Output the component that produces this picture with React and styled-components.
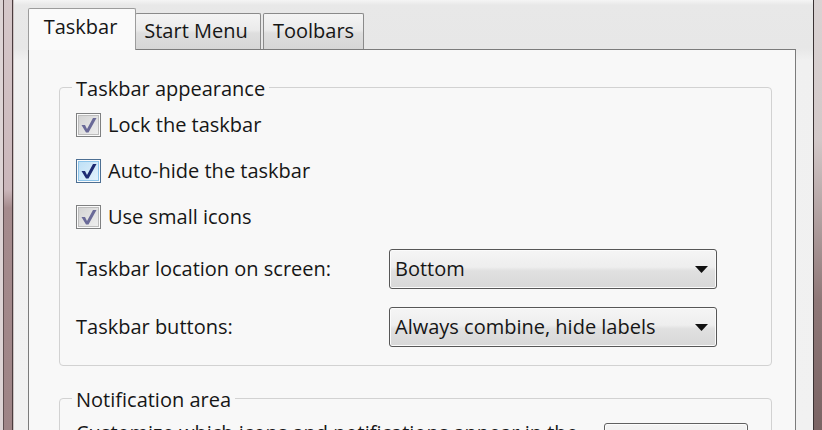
import React from 'react';
import styled, { createGlobalStyle } from 'styled-components';

const Global = createGlobalStyle`
  html, body { margin: 0; padding: 0; }
  body {
    width: 822px;
    height: 430px;
    overflow: hidden;
    background: #ececec;
    font-family: "Open Sans", "Noto Sans", sans-serif;
    color: #161616;
  }
`;

const Window = styled.div`
  display: flex;
  width: 822px;
  height: 430px;
  overflow: hidden;
`;

const LeftFrame = styled.div`
  flex: 0 0 14px;
  background:
    linear-gradient(to right, #ddd4d5 0 3px, #5e4e50 3px 4px, transparent 4px 12px, #4a3c3e 12px 13px, #cdc3c3 13px 14px),
    linear-gradient(to bottom, #d6c8ca 0, #cab6ba 190px, #a58b8d 208px, #9e8486 100%);
`;

const RightFrame = styled.div`
  flex: 0 0 9px;
  background:
    linear-gradient(to right, #3a3233 0 1px, transparent 1px),
    linear-gradient(to bottom, #dad3d3 0, #d2c8c8 140px, #8f7878 300px, #7a6464 100%);
`;

const Content = styled.div`
  flex: 1;
  display: flex;
  flex-direction: column;
  padding: 0 17px 0 14px;
  background: linear-gradient(to bottom, #f5f5f5 0, #e8e8e8 5px, #e7e7e7 48px, #f0f0f0 60px, #f1f1f1 100%);
`;

const TabStrip = styled.div`
  display: flex;
  align-items: flex-end;
  height: 49px;
  flex: 0 0 49px;
`;

const Tab = styled.div`
  box-sizing: border-box;
  position: relative;
  z-index: ${p => (p.$active ? 2 : 1)};
  width: ${p => p.$w}px;
  height: ${p => (p.$active ? 42 : 36)}px;
  margin-bottom: ${p => (p.$active ? '-1px' : '0')};
  margin-left: ${p => p.$ml || 0}px;
  padding: ${p => (p.$active ? 6 : 5)}px ${p => p.$pr || 0}px 0 0;
  border: 1px solid ${p => (p.$active ? '#9c9c9c' : '#8a8a8a')};
  border-bottom: none;
  border-radius: 2px 2px 0 0;
  background: ${p =>
    p.$active
      ? '#fafafa'
      : 'linear-gradient(to bottom, #f4f4f4 0%, #ebebeb 45%, #dedede 55%, #d6d6d6 100%)'};
  text-align: center;
  font-size: 20px;
  line-height: 24px;
  white-space: nowrap;
`;

const Panel = styled.div`
  flex: 1;
  display: flex;
  flex-direction: column;
  border: 1px solid #7b7b7b;
  border-bottom: none;
  background: #f8f8f8;
  padding: 37px 23px 0 30px;
`;

const GroupBox = styled.div`
  display: flex;
  flex-direction: column;
  border: 1px solid #d2d2d2;
  border-radius: 4px;
  padding: 0 ${p => p.$pr || 0}px ${p => p.$pb || 0}px 16px;
  margin-top: ${p => p.$mt || 0}px;
`;

const Legend = styled.div`
  align-self: flex-start;
  margin: -12px 0 0 -4px;
  padding: 0 4px;
  background: #f8f8f8;
  font-size: 20px;
  line-height: 26px;
`;

const CheckList = styled.div`
  display: flex;
  flex-direction: column;
  gap: 22px;
  margin-top: 11px;
`;

const CheckRow = styled.label`
  display: flex;
  align-items: center;
  gap: 7px;
  height: 24px;
  font-size: 20px;
  line-height: 24px;
`;

const CheckBox = styled.span`
  box-sizing: border-box;
  flex: 0 0 25px;
  height: 24px;
  display: flex;
  padding: 1px;
  border: 1px solid ${p => (p.$focus ? '#4d6f93' : '#7f8081')};
  background: #fbfbfb;
`;

const CheckInner = styled.span`
  flex: 1;
  display: flex;
  align-items: center;
  justify-content: center;
  border: 1px solid ${p => (p.$focus ? '#8cc4ea' : '#bdbdbd')};
  background: ${p =>
    p.$focus
      ? 'linear-gradient(135deg, #bfe0f6 0%, #e2f2fc 100%)'
      : 'linear-gradient(135deg, #d4d4d4 0%, #eeeeee 100%)'};
`;

const SelectList = styled.div`
  display: flex;
  flex-direction: column;
  gap: 18px;
  margin-top: 20px;
`;

const SelectRow = styled.div`
  display: grid;
  grid-template-columns: 313px 328px;
  align-items: center;
  font-size: 20px;
  line-height: 24px;
`;

const Select = styled.div`
  box-sizing: border-box;
  height: 40px;
  display: flex;
  align-items: center;
  justify-content: space-between;
  padding: 0 8px 0 5px;
  border: 1px solid #575757;
  border-radius: 3px;
  background: linear-gradient(to bottom, #f5f5f5 0%, #eeeeee 45%, #e0e0e0 55%, #d8d8d8 100%);
  box-shadow: inset 0 0 0 1px #fbfbfb;
  white-space: nowrap;
`;

const BottomRow = styled.div`
  display: flex;
  align-items: flex-start;
  margin-top: 8px;
  font-size: 20px;
  line-height: 24px;
`;

const Desc = styled.div`
  flex: 1;
  min-width: 0;
`;

const Button = styled.div`
  box-sizing: border-box;
  flex: 0 0 144px;
  height: 40px;
  margin: 2px 0 0 10px;
  display: flex;
  align-items: center;
  justify-content: center;
  border: 1px solid #606060;
  border-radius: 3px;
  background: linear-gradient(to bottom, #f4f4f4 0%, #ececec 45%, #dfdfdf 55%, #d3d3d3 100%);
  box-shadow: inset 0 0 0 1px #fcfcfc;
`;

const Check = ({ focus }) => (
  <svg width="17" height="17" viewBox="0 0 17 17">
    <polygon
      points="1.5,8 5,8 7,12 13,1 16.5,1 8.5,15.5 6,15.5"
      fill={focus ? '#1d2b72' : '#6a6a98'}
    />
  </svg>
);

const Arrow = () => (
  <svg width="13" height="7" viewBox="0 0 13 7">
    <polygon points="0,0 13,0 6.5,7" fill="#111" />
  </svg>
);

const checks = [
  { label: 'Lock the taskbar', focus: false },
  { label: 'Auto-hide the taskbar', focus: true },
  { label: 'Use small icons', focus: false },
];

const selects = [
  { label: 'Taskbar location on screen:', value: 'Bottom' },
  { label: 'Taskbar buttons:', value: 'Always combine, hide labels' },
];

export default function App() {
  return (
    <>
      <Global />
      <Window>
        <LeftFrame />
        <Content>
          <TabStrip>
            <Tab $active $w={108} $pr={3}>Taskbar</Tab>
            <Tab $w={126} $ml={-1} $pr={4}>Start Menu</Tab>
            <Tab $w={101} $ml={2}>Toolbars</Tab>
          </TabStrip>
          <Panel>
            <GroupBox $pb={18}>
              <Legend>Taskbar appearance</Legend>
              <CheckList>
                {checks.map(c => (
                  <CheckRow key={c.label}>
                    <CheckBox $focus={c.focus}>
                      <CheckInner $focus={c.focus}>
                        <Check focus={c.focus} />
                      </CheckInner>
                    </CheckBox>
                    {c.label}
                  </CheckRow>
                ))}
              </CheckList>
              <SelectList>
                {selects.map(s => (
                  <SelectRow key={s.label}>
                    <span>{s.label}</span>
                    <Select>
                      <span>{s.value}</span>
                      <Arrow />
                    </Select>
                  </SelectRow>
                ))}
              </SelectList>
            </GroupBox>
            <GroupBox $mt={32} $pr={23} $pb={18}>
              <Legend>Notification area</Legend>
              <BottomRow>
                <Desc>Customize which icons and notifications appear in the notification area.</Desc>
                <Button>Customize...</Button>
              </BottomRow>
            </GroupBox>
          </Panel>
        </Content>
        <RightFrame />
      </Window>
    </>
  );
}
